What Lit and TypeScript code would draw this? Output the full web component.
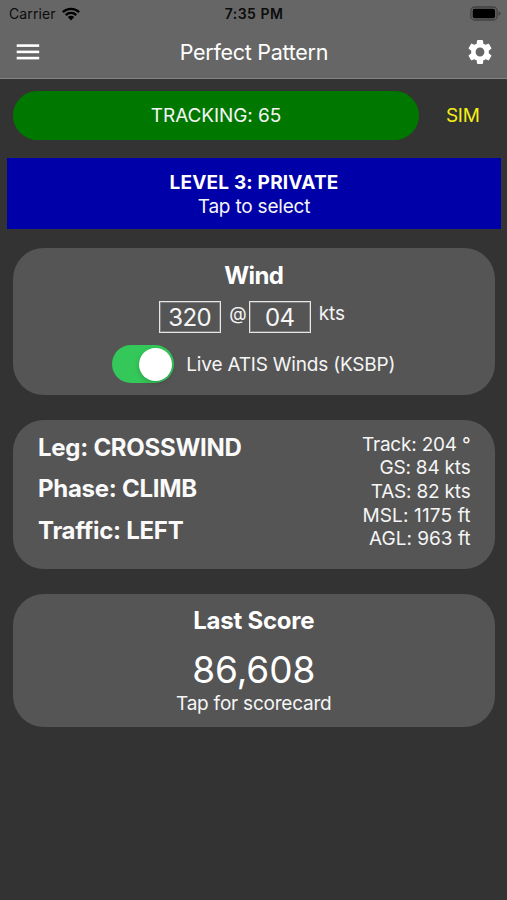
import { LitElement, html, css } from "lit";
import { customElement, property } from "lit/decorators.js";

@customElement("status-bar")
class StatusBar extends LitElement {
  static styles = css`
    :host { display: flex; height: 27px; color: #0c0c0c; font-size: 14px; line-height: 27px; }
    .side { flex: 1; display: flex; align-items: center; }
    .left { padding-left: 9px; gap: 6px; }
    .carrier { letter-spacing: 0.1px; }
    .right { justify-content: flex-end; padding-right: 6px; }
    .time { font-weight: 600; font-size: 14px; letter-spacing: 0.5px; margin: 0 1px 0 -1px; }
    svg { display: block; }
  `;
  render() {
    return html`
      <div class="side left">
        <span class="carrier">Carrier</span>
        <svg width="18" height="14" viewBox="0 0 18 14">
          <path d="M0 4.3A13 13 0 0 1 18 4.3L16.3 6A10.5 10.5 0 0 0 1.7 6Z" fill="#000" />
          <path d="M2.9 7.2A8.8 8.8 0 0 1 15.1 7.2L13.4 8.9A6.3 6.3 0 0 0 4.6 8.9Z" fill="#000" />
          <path d="M5.8 10.1A4.6 4.6 0 0 1 12.2 10.1L9 13.4Z" fill="#000" />
        </svg>
      </div>
      <span class="time">7:35 PM</span>
      <div class="side right">
        <svg width="31" height="15" viewBox="0 0 31 15">
          <rect x="0.9" y="1" width="26.2" height="13" rx="3.8" fill="none" stroke="#424242" stroke-width="1.3" />
          <rect x="2.7" y="2.8" width="22.4" height="9.4" rx="2" fill="#000" />
          <path d="M28.5 5.2Q30.6 6 30.6 7.5Q30.6 9 28.5 9.8Z" fill="#424242" />
        </svg>
      </div>
    `;
  }
}

@customElement("nav-bar")
class NavBar extends LitElement {
  @property() heading = "";
  static styles = css`
    :host { display: flex; align-items: center; justify-content: space-between; height: 50px; padding: 0 15px 0 16px; }
    h1 { margin: 0; font-size: 21.5px; font-weight: 400; line-height: 26px; color: #fff; letter-spacing: -0.28px; }
    svg { display: block; }
  `;
  render() {
    return html`
      <svg width="24" height="24" viewBox="0 0 24 24" fill="#fff">
        <rect x="0.7" y="4.3" width="22.5" height="2.6" />
        <rect x="0.7" y="10.6" width="22.5" height="2.6" />
        <rect x="0.7" y="16.8" width="22.5" height="2.6" />
      </svg>
      <h1>${this.heading}</h1>
      <svg width="24" height="26" viewBox="2.2 1.6 19.6 20.8" preserveAspectRatio="none" fill="#fff">
        <path d="M19.14 12.94c.04-.3.06-.61.06-.94 0-.32-.02-.64-.07-.94l2.03-1.58c.18-.14.23-.41.12-.61l-1.92-3.32c-.12-.22-.37-.29-.59-.22l-2.39.96c-.5-.38-1.03-.7-1.62-.94l-.36-2.54c-.04-.24-.24-.41-.48-.41h-3.84c-.24 0-.43.17-.47.41l-.36 2.54c-.59.24-1.13.57-1.62.94l-2.39-.96c-.22-.08-.47 0-.59.22L2.74 8.87c-.12.21-.08.47.12.61l2.03 1.58c-.05.3-.09.63-.09.94s.02.64.07.94l-2.03 1.58c-.18.14-.23.41-.12.61l1.92 3.32c.12.22.37.29.59.22l2.39-.96c.5.38 1.03.7 1.62.94l.36 2.54c.05.24.24.41.48.41h3.84c.24 0 .44-.17.47-.41l.36-2.54c.59-.24 1.13-.56 1.62-.94l2.39.96c.22.08.47 0 .59-.22l1.92-3.32c.12-.22.07-.47-.12-.61l-2.01-1.58zM12 15.6c-1.98 0-3.6-1.62-3.6-3.6s1.62-3.6 3.6-3.6 3.6 1.62 3.6 3.6-1.62 3.6-3.6 3.6z" />
      </svg>
    `;
  }
}

@customElement("app-root")
class AppRoot extends LitElement {
  static styles = css`
    :host {
      display: block; height: 900px; overflow: hidden; box-sizing: border-box;
      background: #333; color: #f5f5f5;
      font-family: Inter, "Liberation Sans", sans-serif; font-size: 19px; line-height: 24px;
      font-feature-settings: "calt" 0; white-space: nowrap;
    }
    .header { background: #666; border-bottom: 1.5px solid #858585; height: 78px; }
    .tracking { display: flex; margin: 12px 6px 0 13px; height: 48.5px; }
    .pill, .sim { display: flex; align-items: center; justify-content: center; box-sizing: border-box; padding-top: 2px; }
    .pill { width: 406px; border-radius: 25px; background: #007800; letter-spacing: -0.08px; }
    .sim { flex: 1; color: #f5f014; letter-spacing: -0.3px; padding-left: 5.5px; }
    .level { margin: 18px 6px 0 7px; height: 58.5px; padding-top: 13px; background: #0000a8; text-align: center; }
    .level-name { font-weight: 700; color: #fff; letter-spacing: 0.2px; }
    .tap { letter-spacing: -0.2px; }
    .card { margin: 0 12.5px 0 13px; border-radius: 31px; background: #555; box-sizing: border-box; }
    .wind { margin-top: 18.5px; height: 147.5px; display: flex; flex-direction: column; align-items: center; padding-top: 13px; }
    h2 { margin: 0; font-size: 24px; line-height: 30px; font-weight: 700; color: #fff; letter-spacing: -0.25px; }
    .wind h2 { letter-spacing: -0.6px; }
    .wind-row { display: flex; height: 33px; margin-top: 10px; padding-right: 4px; }
    .field {
      width: 62px; height: 32px; box-sizing: border-box; border: 1px solid #e6e6e6;
      box-shadow: inset 0 0 0 1px rgba(255, 255, 255, 0.25);
      font-size: 24px; line-height: 32px; text-align: center; letter-spacing: -0.5px;
    }
    .at, .kts { padding-top: 1px; box-sizing: border-box; }
    .at { width: 28px; text-align: right; padding-right: 2px; font-size: 18px; }
    .kts { padding-left: 8px; letter-spacing: -0.15px; }
    .live { display: flex; align-items: center; margin-top: 11.5px; gap: 12px; }
    .live-label { letter-spacing: -0.2px; padding-top: 1px; }
    .switch { width: 62px; height: 38px; border-radius: 19px; background: #34c759; display: flex; align-items: center; justify-content: flex-end; padding-right: 2px; box-sizing: border-box; }
    .knob { width: 33px; height: 33px; border-radius: 50%; background: #fff; box-shadow: 0 2px 5px rgba(0, 0, 0, 0.18); }
    .flight { margin-top: 24.5px; height: 149px; padding: 13px 24px 0 25px; display: flex; justify-content: space-between; }
    .state { display: flex; flex-direction: column; gap: 11.5px; font-size: 24px; line-height: 30px; font-weight: 700; color: #fafafa; letter-spacing: -0.27px; }
    .data { text-align: right; line-height: 23.7px; letter-spacing: -0.2px; }
    .data .loose { letter-spacing: 0; }
    .data .looser { letter-spacing: 0.13px; }
    .score { margin-top: 25px; height: 133px; padding-top: 12.5px; text-align: center; }
    .points { font-size: 37px; line-height: 44px; margin-top: 11.5px; color: #fff; letter-spacing: -0.1px; }
    .hint { letter-spacing: -0.22px; }
  `;
  private state = ["Leg: CROSSWIND", "Phase: CLIMB", "Traffic: LEFT"];
  private data = [
    ["Track: 204 °", ""],
    ["GS: 84 kts", ""],
    ["TAS: 82 kts", ""],
    ["MSL: 1175 ft", "looser"],
    ["AGL: 963 ft", "loose"],
  ];
  render() {
    return html`
      <div class="header">
        <status-bar></status-bar>
        <nav-bar heading="Perfect Pattern"></nav-bar>
      </div>
      <div class="tracking">
        <div class="pill">TRACKING: 65</div>
        <div class="sim">SIM</div>
      </div>
      <div class="level">
        <div class="level-name">LEVEL 3: PRIVATE</div>
        <div class="tap">Tap to select</div>
      </div>
      <section class="card wind">
        <h2>Wind</h2>
        <div class="wind-row">
          <div class="field">320</div>
          <div class="at">@</div>
          <div class="field">04</div>
          <div class="kts">kts</div>
        </div>
        <div class="live">
          <div class="switch"><div class="knob"></div></div>
          <span class="live-label">Live ATIS Winds (KSBP)</span>
        </div>
      </section>
      <section class="card flight">
        <div class="state">${this.state.map((s) => html`<div>${s}</div>`)}</div>
        <div class="data">${this.data.map(([s, c]) => html`<div class=${c}>${s}</div>`)}</div>
      </section>
      <section class="card score">
        <h2>Last Score</h2>
        <div class="points">86,608</div>
        <div class="hint">Tap for scorecard</div>
      </section>
    `;
  }
}
